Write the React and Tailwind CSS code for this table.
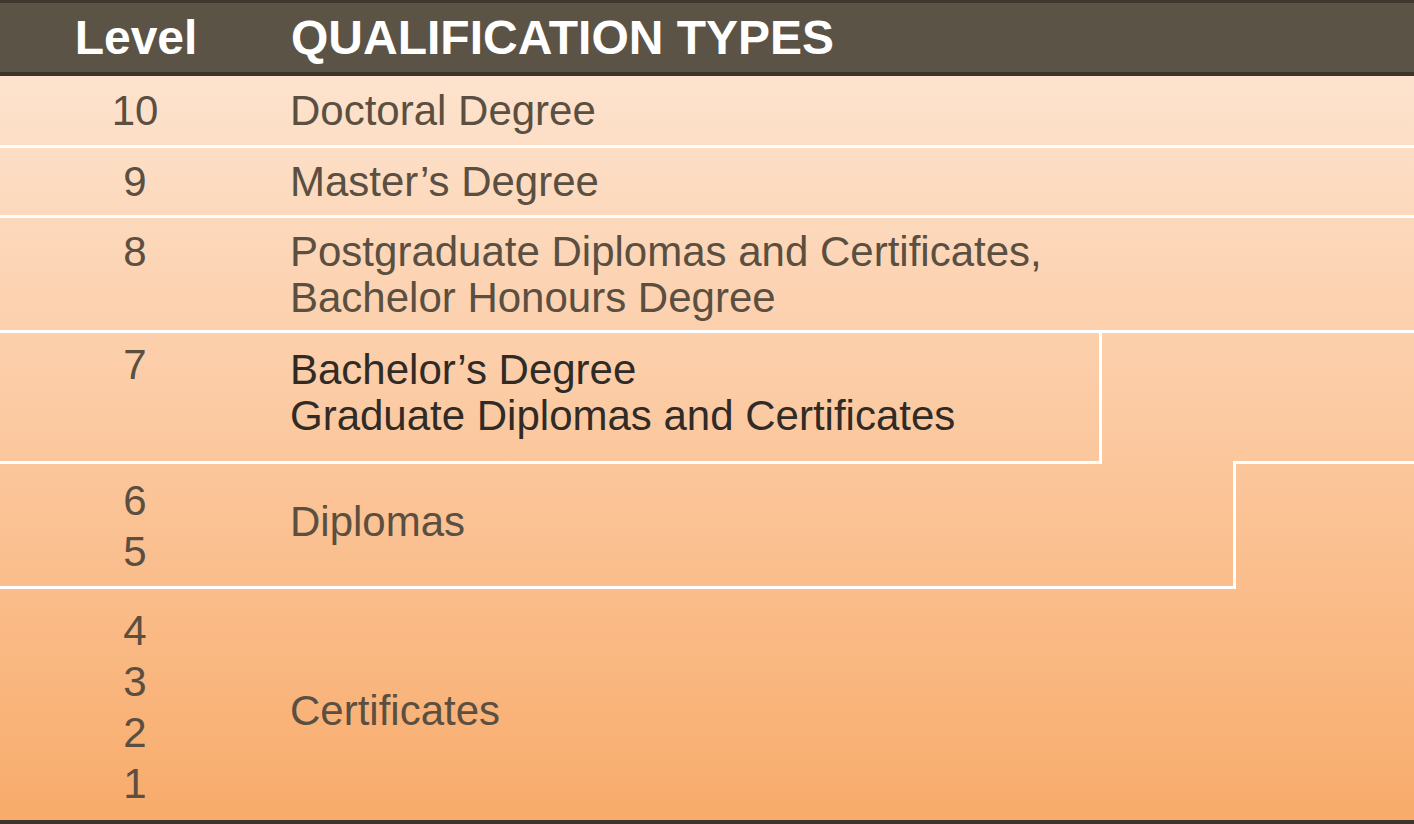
export default function App() {
  const font = { fontFamily: '"Liberation Sans", Arial, sans-serif' };

  return (
    <div className="w-[1414px] h-[824px] flex flex-col bg-white" style={font}>
      {/* header */}
      <div className="h-[76px] flex items-center bg-[#5b5345] border-t-[3px] border-b-[4px] border-t-[#40382e] border-b-[#3c352b] text-white font-bold text-[48px] leading-none">
        <div className="w-[272px] text-center">Level</div>
        <div className="pl-[19px]">QUALIFICATION TYPES</div>
      </div>

      {/* body */}
      <div className="h-[748px] flex flex-col bg-gradient-to-b from-[#fde3ce] to-[#f8ab6a] text-[#5a4f41] text-[42px] border-b-[4px] border-[#3e362c]">
        <div className="h-[72px] flex items-center border-b-[3px] border-white">
          <div className="w-[270px] text-center">10</div>
          <div className="pl-[20px]">Doctoral Degree</div>
        </div>
        <div className="h-[70px] flex items-center border-b-[3px] border-white">
          <div className="w-[270px] text-center">9</div>
          <div className="pl-[20px]">Master’s Degree</div>
        </div>
        <div className="h-[115px] flex items-start pt-[11px] border-b-[3px] border-white leading-[46px]">
          <div className="w-[270px] text-center">8</div>
          <div className="pl-[20px]">
            Postgraduate Diplomas and Certificates,
            <br />
            Bachelor Honours Degree
          </div>
        </div>

        <div className="flex-1 grid grid-cols-[1102px_134px_178px] grid-rows-[131px_125px_1fr]">
          <div className="col-start-1 row-start-1 flex items-start border-r-[3px] border-b-[3px] border-white leading-[46px]">
            <div className="w-[270px] text-center pt-[9px]">7</div>
            <div className="pl-[20px] pt-[14px] text-[#302b26]">
              Bachelor’s Degree
              <br />
              Graduate Diplomas and Certificates
            </div>
          </div>
          <div className="col-start-3 row-start-1 ml-[-3px] border-b-[3px] border-white" />

          <div className="col-start-1 col-span-2 row-start-2 flex border-r-[3px] border-b-[3px] border-white">
            <div className="w-[270px] text-center pt-[11px] leading-[51px]">
              6
              <br />
              5
            </div>
            <div className="pl-[20px] self-center pb-[6px] leading-[46px]">Diplomas</div>
          </div>

          <div className="col-start-1 col-span-3 row-start-3 flex">
            <div className="w-[270px] text-center pt-[16px] leading-[51px]">
              4
              <br />
              3
              <br />
              2
              <br />
              1
            </div>
            <div className="pl-[20px] self-center pt-[12px] leading-[46px]">Certificates</div>
          </div>
        </div>
      </div>
    </div>
  );
}
